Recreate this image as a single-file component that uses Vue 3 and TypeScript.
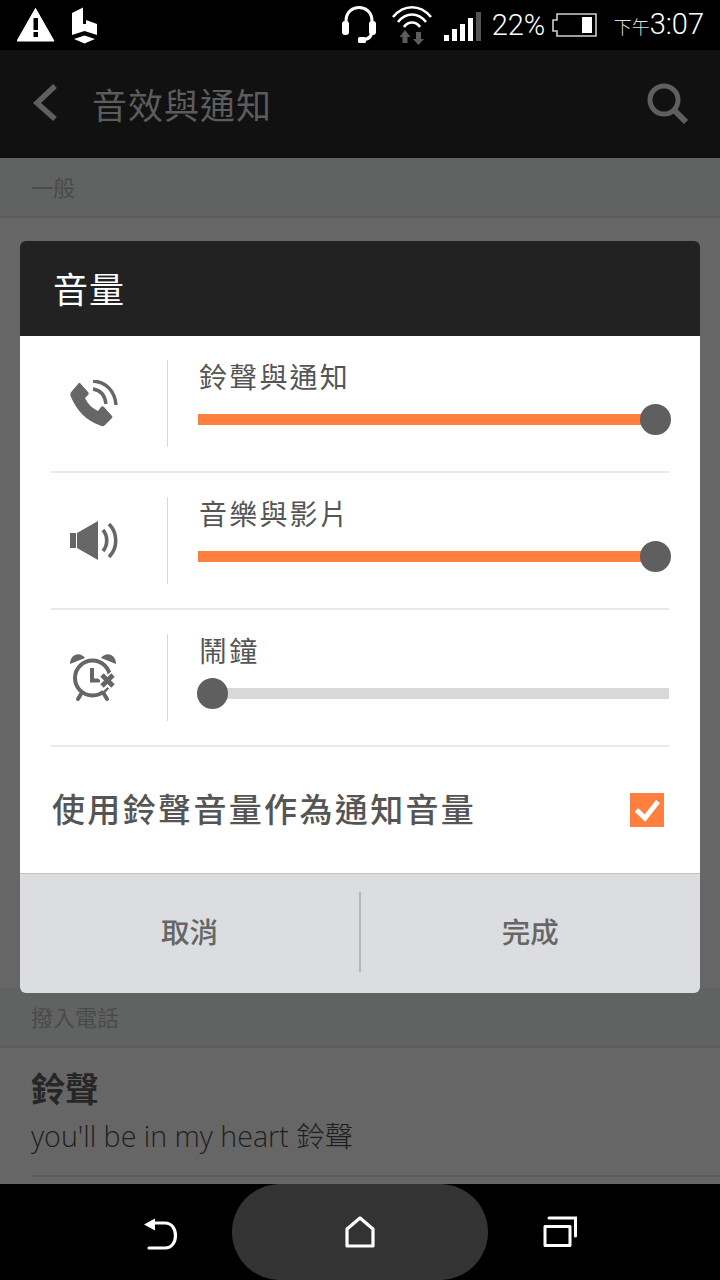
<script setup lang="ts">
interface VolumeRow {
  label: string;
  icon: 'ring' | 'media' | 'alarm';
  percent: number;
}
const rows: VolumeRow[] = [
  { label: '鈴聲與通知', icon: 'ring', percent: 100 },
  { label: '音樂與影片', icon: 'media', percent: 100 },
  { label: '鬧鐘', icon: 'alarm', percent: 0 },
];
</script>

<template>
  <div class="screen">
    <header class="status">
      <div class="status-left">
        <svg class="warn" viewBox="17 8 38 34" width="38" height="34">
          <path d="M35.5 8.5 L54 41 H17 Z" fill="#fff" stroke="#fff" stroke-linejoin="round" />
          <rect x="33.5" y="18" width="4.5" height="12" fill="#000" />
          <rect x="33.5" y="32" width="4.5" height="5" fill="#000" />
        </svg>
        <svg class="sense" viewBox="72 7 26 37" width="26" height="37">
          <path d="M72 13 L83 7.5 V24 H86 V20 L97 24 V35 L84.5 31 L72 35 Z" fill="#fff" />
          <path d="M84.5 35.5 L95 39 L84.5 43.5 L74 39 Z" fill="#fff" />
        </svg>
      </div>
      <div class="status-right">
        <svg class="head" viewBox="341 4 36 38" width="36" height="38">
          <path d="M346 26 V19 C346 1 372 1 372 19 V28 C372 35 368 38 361 38" fill="none" stroke="#fff" stroke-width="3" />
          <rect x="342" y="19" width="7" height="14" rx="3" fill="#fff" />
          <rect x="369" y="19" width="7" height="14" rx="3" fill="#fff" />
          <rect x="358" y="35" width="8" height="6" rx="1.5" fill="#fff" />
        </svg>
        <svg class="wifi" viewBox="391 4 42 42" width="42" height="42">
          <path d="M393 17 C404 4 420 4 431 17" fill="none" stroke="#fff" stroke-width="2.6" />
          <path d="M398 22 C406 12 418 12 426 22" fill="none" stroke="#fff" stroke-width="2.6" />
          <path d="M404 27 C408 21 416 21 420 27" fill="none" stroke="#fff" stroke-width="2.6" />
          <path d="M399.5 37 L405 30 L410.5 37 H407.5 V43 H402.5 V37 Z" fill="#5c5c5c" />
          <path d="M416 32 H421 V39 H424 L418.5 45 L413 39 H416 Z" fill="#5c5c5c" />
        </svg>
        <div class="signal">
          <span class="bar b1"></span>
          <span class="bar b2"></span>
          <span class="bar b3"></span>
          <span class="bar b4"></span>
          <span class="bar b5"></span>
        </div>
        <span class="pct">22%</span>
        <svg class="batt" viewBox="551 12 47 26" width="47" height="26">
          <path d="M557 14 H596 V36 H557 V31 H553 V20 H557 Z" fill="none" stroke="#cfcfcf" stroke-width="1.6" />
          <rect x="582" y="17" width="10" height="16" fill="#fff" />
        </svg>
        <span class="clock"><small>下午</small>3:07</span>
      </div>
    </header>

    <div class="actionbar">
      <svg class="back" viewBox="30 84 30 42" width="30" height="42">
        <path d="M55 88 L37 105 L55 121" fill="none" stroke="#5f5f5f" stroke-width="5.5" />
      </svg>
      <h1 class="page-title">音效與通知</h1>
      <svg class="search" viewBox="644 80 46 46" width="46" height="46">
        <circle cx="665" cy="101" r="14" fill="none" stroke="#5f5f5f" stroke-width="5" />
        <path d="M675 111 L687 123" stroke="#5f5f5f" stroke-width="6" />
      </svg>
    </div>

    <main class="content">
      <div class="section first">一般</div>
      <div class="hidden-list"></div>
      <div class="section">撥入電話</div>
      <div class="item">
        <div class="item-title">鈴聲</div>
        <div class="item-sub">you'll be in my heart 鈴聲</div>
      </div>
    </main>

    <nav class="navbar">
      <svg viewBox="141 1212 38 36" width="38" height="36">
        <path d="M154 1221 H165 C179 1221 179 1246 165 1246 H149" fill="none" stroke="#fff" stroke-width="3.2" stroke-linecap="round" />
        <path d="M144 1222.5 L155 1216.5 V1228.5 Z" fill="#fff" />
      </svg>
      <div class="home">
        <svg viewBox="344 1215 32 34" width="32" height="34">
          <path d="M360 1218 L373 1229 V1246 H347 V1229 Z" fill="none" stroke="#fff" stroke-width="3.2" stroke-linejoin="round" />
        </svg>
      </div>
      <svg viewBox="541 1215 36 34" width="36" height="34">
        <rect x="545" y="1226.5" width="25" height="19" fill="none" stroke="#fff" stroke-width="3" stroke-linejoin="round" />
        <path d="M549 1218 H575.5 V1236" fill="none" stroke="#fff" stroke-width="3" stroke-linecap="round" />
      </svg>
    </nav>

    <section class="dialog">
      <h2 class="dialog-title">音量</h2>
      <div class="dialog-body">
        <div v-for="row in rows" :key="row.label" class="vol-row">
          <div class="icon-cell">
            <svg v-if="row.icon === 'ring'" viewBox="70 381 48 48" width="48" height="48">
              <path d="M80 384 L88 393 C89 394 89 395 88 396 L85 399 C88 405 92 409 98 412 L101 408 C102 407 103 407 104 408 L112 417 C113 418 112 419 111 420 L105 426 C103 428 101 427 99 426 C86 421 77 412 71 398 C70 396 70 394 72 392 L78 385 C78 384 79 384 80 384 Z" fill="#666" />
              <path d="M93 390 C100 391 105 396 106 405" fill="none" stroke="#666" stroke-width="3.4" />
              <path d="M93 382 C106 383 115 392 116 406" fill="none" stroke="#666" stroke-width="3.4" />
            </svg>
            <svg v-else-if="row.icon === 'media'" viewBox="70 518 48 46" width="48" height="46">
              <rect x="70" y="533" width="6" height="15" fill="#666" />
              <path d="M77 533 L98 521 V560 L77 548 Z" fill="#666" />
              <path d="M103 530 C108 536 108 545 103 551" fill="none" stroke="#666" stroke-width="3.6" />
              <path d="M109 524 C118 533 118 548 109 557" fill="none" stroke="#666" stroke-width="3.6" />
            </svg>
            <svg v-else viewBox="70 654 48 48" width="48" height="48">
              <path d="M70 664 C70 654 80 651 85 658 Z" fill="#666" />
              <path d="M101 658 C106 651 116 654 116 664 Z" fill="#666" />
              <circle cx="92.5" cy="678" r="17.5" fill="none" stroke="#666" stroke-width="4" />
              <path d="M92 668 V680.5 H100" fill="none" stroke="#666" stroke-width="4" />
              <path d="M81 694 L78 699 M104 694 L107 699" stroke="#666" stroke-width="4" stroke-linecap="round" />
              <path d="M100 674 L115 688 M115 674 L100 688" stroke="#fff" stroke-width="9" />
              <path d="M102 675 L113 686 M113 675 L102 686" stroke="#666" stroke-width="4.8" />
            </svg>
          </div>
          <div class="vol-main">
            <div class="vol-label">{{ row.label }}</div>
            <div class="track">
              <div class="fill" :style="{ width: row.percent + '%' }"></div>
              <div class="thumb" :class="{ end: row.percent === 100 }"></div>
            </div>
          </div>
        </div>
        <div class="check-row">
          <span class="check-label">使用鈴聲音量作為通知音量</span>
          <svg class="check" viewBox="0 0 34 34" width="34" height="34">
            <rect width="34" height="34" fill="#ff7f3f" />
            <path d="M6.5 17 L15 25 L28 8.5" fill="none" stroke="#fff" stroke-width="5" />
          </svg>
        </div>
      </div>
      <footer class="dialog-foot">
        <button class="foot-btn" type="button">取消</button>
        <span class="foot-div"></span>
        <button class="foot-btn" type="button">完成</button>
      </footer>
    </section>
  </div>
</template>

<style>
html, body { margin: 0; background: #000; }
</style>

<style scoped>
.screen {
  position: relative;
  width: 720px;
  height: 1280px;
  display: flex;
  flex-direction: column;
  overflow: hidden;
  background: #000;
  font-family: "Noto Sans CJK TC", "Noto Sans", sans-serif;
}
.status {
  height: 50px;
  flex: none;
  display: flex;
  justify-content: space-between;
  align-items: center;
  background: #000;
  color: #fff;
}
.status-left { display: flex; align-items: center; padding-left: 17px; gap: 17px; }
.status-right { display: flex; align-items: center; padding-right: 16px; }
.head { margin-right: 14px; }
.wifi { margin-right: 11px; }
.signal { display: flex; align-items: flex-end; gap: 3px; height: 30px; margin-right: 11px; margin-top: 2px; }
.bar { width: 5px; background: #fff; display: block; }
.b1 { height: 6px; }
.b2 { height: 12px; }
.b3 { height: 17px; }
.b4 { height: 23px; }
.b5 { height: 29px; background: #555; }
.pct {
  font-family: Roboto, sans-serif;
  font-size: 29px;
  font-weight: 300;
  line-height: 50px;
  margin-right: -21px;
  width: 80px;
}
.batt { margin-right: 16px; }
.clock {
  font-family: Roboto, sans-serif;
  font-size: 29px;
  font-weight: 300;
  line-height: 50px;
  white-space: nowrap;
}
.clock small {
  font-family: "Noto Sans CJK TC", sans-serif;
  font-size: 18px;
  color: #ddd;
  font-weight: 300;
}
.actionbar {
  height: 108px;
  flex: none;
  display: flex;
  align-items: center;
  background: #111;
  padding: 0 30px;
  box-sizing: border-box;
}
.page-title {
  margin: 0 0 0 32px;
  font-size: 35px;
  line-height: 44px;
  letter-spacing: 1px;
  font-weight: 400;
  color: #5c5c5c;
  flex: 1;
}
.back { margin-top: -3px; }
.search { margin-top: -4px; transform: translateX(-1px); }
.content {
  flex: 1;
  min-height: 0;
  display: flex;
  flex-direction: column;
  background: #666;
  overflow: hidden;
}
.section {
  height: 60px;
  flex: none;
  box-sizing: border-box;
  padding-left: 31px;
  padding-bottom: 2px;
  display: flex;
  align-items: center;
  font-size: 22px;
  color: #4a4a4a;
  background: #616362;
  border-bottom: 2px solid #595b5a;
}
.hidden-list { height: 770px; flex: none; }
.item {
  margin-left: 31px;
  height: 129px;
  flex: none;
  box-sizing: border-box;
  border-bottom: 2px solid #5a5a5a;
  padding-top: 18px;
}
.item-title {
  font-size: 34px;
  line-height: 44px;
  font-weight: 700;
  color: #262626;
}
.item-sub {
  font-family: "Open Sans", "Noto Sans CJK TC", sans-serif;
  font-size: 28.6px;
  font-weight: 300;
  line-height: 40px;
  margin-top: 6px;
  color: #1f1f1f;
}
.navbar {
  height: 96px;
  flex: none;
  display: flex;
  align-items: center;
  justify-content: space-between;
  padding: 0 143px 0 141px;
  box-sizing: border-box;
  background: #000;
}
.home {
  width: 256px;
  height: 96px;
  border-radius: 48px;
  background: #333;
  display: flex;
  align-items: center;
  justify-content: center;
}
.dialog {
  position: absolute;
  left: 20px;
  top: 241px;
  width: 680px;
  height: 752px;
  display: flex;
  flex-direction: column;
  border-radius: 6px;
  overflow: hidden;
}
.dialog-title {
  margin: 0;
  height: 95px;
  flex: none;
  box-sizing: border-box;
  background: #222;
  color: #fff;
  font-size: 35px;
  font-weight: 400;
  letter-spacing: 1px;
  padding-left: 33px;
  padding-bottom: 3px;
  display: flex;
  align-items: center;
}
.dialog-body {
  flex: 1;
  background: #fff;
  padding: 0 31px;
  display: flex;
  flex-direction: column;
}
.vol-row {
  height: 137px;
  flex: none;
  box-sizing: border-box;
  padding-top: 24px;
  display: flex;
  align-items: flex-start;
  border-bottom: 2px solid #e9e9e9;
}
.icon-cell {
  width: 117px;
  height: 87px;
  flex: none;
  box-sizing: border-box;
  padding-left: 19px;
  border-right: 1.5px solid #d8d8d8;
  display: flex;
  align-items: center;
}
.vol-main { flex: 1; padding-left: 30px; }
.vol-label {
  font-size: 28px;
  line-height: 36px;
  letter-spacing: 2.2px;
  color: #555;
  margin-top: -2px;
  padding-left: 1px;
}
.track {
  position: relative;
  height: 11px;
  margin-top: 20px;
  background: #d8d8d8;
}
.fill { height: 100%; background: #ff7f3f; }
.thumb {
  position: absolute;
  left: -1px;
  top: -10px;
  width: 31px;
  height: 31px;
  border-radius: 50%;
  background: #5f5f5f;
}
.thumb.end { left: auto; right: -2px; }
.check-row {
  flex: 1;
  display: flex;
  align-items: center;
  justify-content: space-between;
  padding-left: 1px;
  padding-right: 5px;
}
.check-label {
  font-size: 33px;
  letter-spacing: 2.35px;
  font-weight: 500;
  color: #555;
  margin-top: -4px;
}
.dialog-foot {
  height: 120px;
  flex: none;
  box-sizing: border-box;
  background: #dcdde0;
  border-top: 1.5px solid #c2c2c2;
  padding-bottom: 4px;
  display: flex;
  align-items: center;
}
.foot-btn {
  flex: 1;
  height: 100%;
  border: 0;
  background: none;
  padding: 0 0 3px;
  font-family: inherit;
  font-size: 28.5px;
  font-weight: 500;
  color: #666;
}
.foot-div { width: 1.5px; height: 80px; background: #b5b5b5; flex: none; }
</style>
